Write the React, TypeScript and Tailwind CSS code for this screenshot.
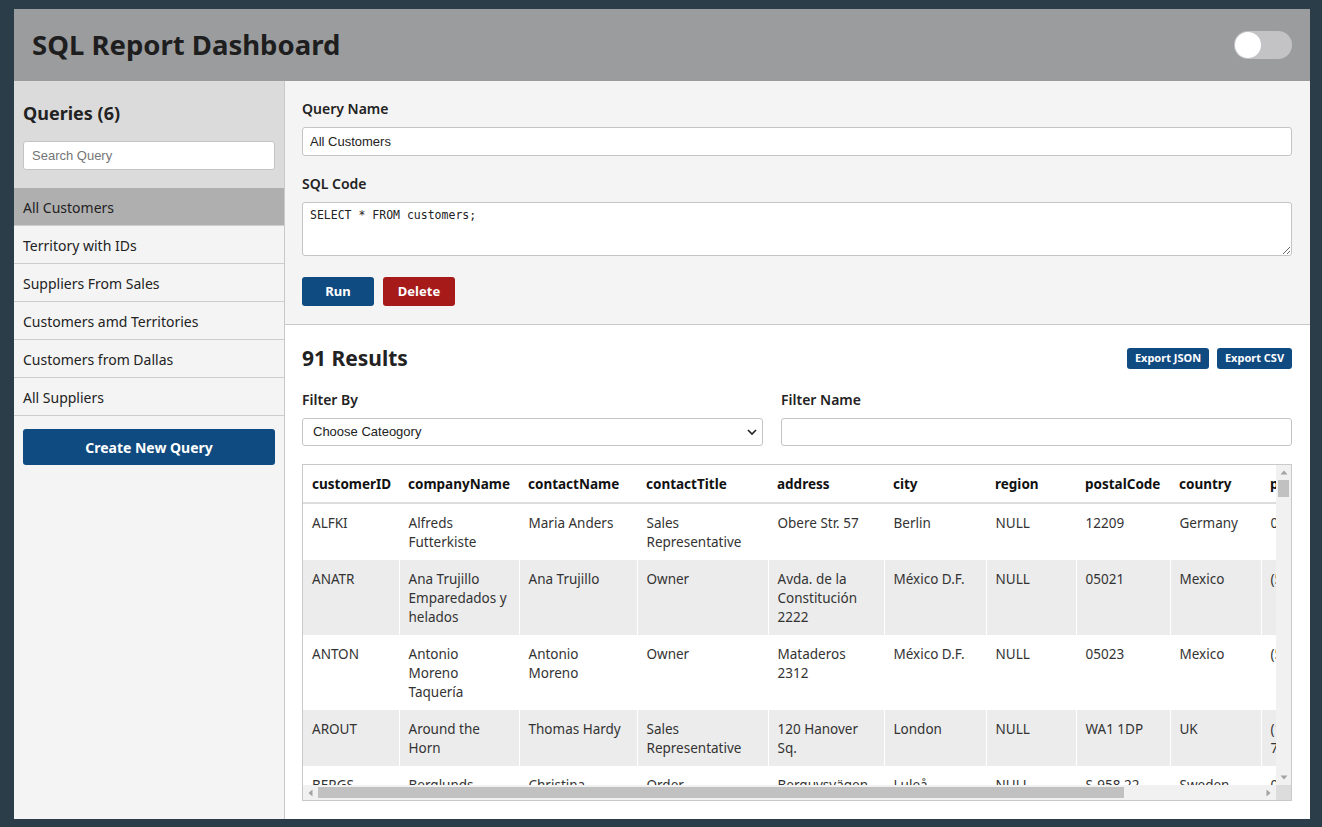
import { useState } from 'react';

const queries = [
  'All Customers',
  'Territory with IDs',
  'Suppliers From Sales',
  'Customers amd Territories',
  'Customers from Dallas',
  'All Suppliers',
];

const columns = [
  { key: 'customerID', w: 'w-[96px]' },
  { key: 'companyName', w: 'w-[120px]' },
  { key: 'contactName', w: 'w-[118px]' },
  { key: 'contactTitle', w: 'w-[131px]' },
  { key: 'address', w: 'w-[116px]' },
  { key: 'city', w: 'w-[102px]' },
  { key: 'region', w: 'w-[90px]' },
  { key: 'postalCode', w: 'w-[94px]' },
  { key: 'country', w: 'w-[91px]' },
  { key: 'phone', w: 'w-[112px]' },
  { key: 'fax', w: 'w-[112px]' },
];

const rows = [
  ['ALFKI', 'Alfreds Futterkiste', 'Maria Anders', 'Sales Representative', 'Obere Str. 57', 'Berlin', 'NULL', '12209', 'Germany', '030-0074321', '030-0076545'],
  ['ANATR', 'Ana Trujillo Emparedados y helados', 'Ana Trujillo', 'Owner', 'Avda. de la Constitución 2222', 'México D.F.', 'NULL', '05021', 'Mexico', '(5) 555-4729', '(5) 555-3745'],
  ['ANTON', 'Antonio Moreno Taquería', 'Antonio Moreno', 'Owner', 'Mataderos 2312', 'México D.F.', 'NULL', '05023', 'Mexico', '(5) 555-3932', 'NULL'],
  ['AROUT', 'Around the Horn', 'Thomas Hardy', 'Sales Representative', '120 Hanover Sq.', 'London', 'NULL', 'WA1 1DP', 'UK', '(171) 555-7788', '(171) 555-6750'],
  ['BERGS', 'Berglunds snabbköp', 'Christina Berglund', 'Order Administrator', 'Berguvsvägen 8', 'Luleå', 'NULL', 'S-958 22', 'Sweden', '0921-12 34 65', '0921-12 34 67'],
  ['BLAUS', 'Blauer See Delikatessen', 'Hanna Moos', 'Sales Representative', 'Forsterstr. 57', 'Mannheim', 'NULL', '68306', 'Germany', '0621-08460', '0621-08924'],
];

function Arrow({ dir }: { dir: 'up' | 'down' | 'left' | 'right' }) {
  const d = {
    up: 'M0.5 5.5 L4 1.5 L7.5 5.5 Z',
    down: 'M0.5 1.5 L4 5.5 L7.5 1.5 Z',
    left: 'M5.5 0.5 L1.5 4 L5.5 7.5 Z',
    right: 'M1.5 0.5 L5.5 4 L1.5 7.5 Z',
  }[dir];
  return (
    <svg width="8" height="8" viewBox="0 0 8 8">
      <path d={d} fill="#a3a3a3" />
    </svg>
  );
}

export default function App() {
  const [selected, setSelected] = useState(0);

  return (
    <div className="min-h-screen bg-[#2b3d48] pt-[9px] pb-[8px] pl-[14px] pr-[12px] font-['Noto_Sans',sans-serif] text-[#222]">
      <div className="flex h-[810px] flex-col">
        <header className="flex h-[72px] shrink-0 items-center justify-between bg-[#9b9c9e] pl-[18px] pr-[18px]">
          <h1 className="text-[27.5px] font-bold leading-none text-[#1e1e1e]">SQL Report Dashboard</h1>
          <div className="flex h-[28px] w-[58px] items-center rounded-full bg-[#c3c3c5] px-[1px]">
            <div className="h-[26px] w-[26px] rounded-full bg-white" />
          </div>
        </header>

        <div className="flex min-h-0 flex-1">
          <aside className="flex w-[271px] shrink-0 flex-col border-r border-[#c9c9c9] bg-[#f4f4f4]">
            <div className="bg-[#dbdbdb] px-[9px] pt-[20px] pb-[18px]">
              <h2 className="text-[18px] font-bold leading-[24px]">Queries (6)</h2>
              <input
                placeholder="Search Query"
                className="mt-[16px] h-[29px] w-full rounded-[3px] border border-[#c4c4c4] bg-white px-[8px] font-['Liberation_Sans',Arial,sans-serif] text-[13px] placeholder:text-[#757575] outline-none"
              />
            </div>
            <ul>
              {queries.map((q, i) => (
                <li
                  key={q}
                  onClick={() => setSelected(i)}
                  className={`flex h-[38px] cursor-pointer items-center border-b border-[#cdcdcd] px-[9px] pt-[2px] text-[14px] ${
                    selected === i ? 'bg-[#afafaf]' : 'bg-[#f4f4f4]'
                  }`}
                >
                  {q}
                </li>
              ))}
            </ul>
            <div className="px-[9px] pt-[13px]">
              <button className="h-[36px] w-full rounded-[3px] bg-[#0f4a80] text-[14px] font-bold text-white">
                Create New Query
              </button>
            </div>
          </aside>

          <main className="flex min-w-0 flex-1 flex-col bg-white">
            <section className="border-b border-[#c9c9c9] bg-[#f4f4f4] pl-[17px] pr-[18px] pt-[18px] pb-[18px]">
              <label className="block text-[14px] font-semibold leading-[20px]">Query Name</label>
              <input
                defaultValue="All Customers"
                className="mt-[8px] h-[29px] w-full rounded-[3px] border border-[#c4c4c4] bg-white px-[7px] font-['Liberation_Sans',Arial,sans-serif] text-[13px] outline-none"
              />
              <label className="mt-[18px] block text-[14px] font-semibold leading-[20px]">SQL Code</label>
              <textarea
                defaultValue="SELECT * FROM customers;"
                className="mt-[8px] block h-[54px] w-full rounded-[3px] border border-[#c4c4c4] bg-white px-[7px] py-[4px] font-['DejaVu_Sans_Mono',monospace] text-[11.5px] leading-[16px] outline-none"
              />
              <div className="mt-[21px] flex gap-[9px]">
                <button className="h-[29px] w-[72px] rounded-[3px] bg-[#0f4a80] pt-[1px] text-[13px] font-bold text-white">Run</button>
                <button className="h-[29px] w-[72px] rounded-[3px] bg-[#a71a1a] pt-[1px] text-[13px] font-bold text-white">Delete</button>
              </div>
            </section>

            <section className="flex min-h-0 flex-1 flex-col pl-[17px] pr-[18px] pt-[21px] pb-[18px]">
              <div className="flex h-[24px] items-center justify-between">
                <h2 className="text-[21px] font-bold leading-[24px]">91 Results</h2>
                <div className="flex gap-[8px]">
                  <button className="h-[21px] w-[82px] rounded-[3px] bg-[#0f4a80] text-[11px] font-bold text-white">Export JSON</button>
                  <button className="h-[21px] w-[75px] rounded-[3px] bg-[#0f4a80] text-[11px] font-bold text-white">Export CSV</button>
                </div>
              </div>

              <div className="mt-[20px] flex gap-[18px]">
                <div className="w-[461px] shrink-0">
                  <label className="block text-[14px] font-semibold leading-[20px]">Filter By</label>
                  <div className="relative mt-[8px]">
                    <select className="h-[28px] w-full appearance-none rounded-[3px] border border-[#c4c4c4] bg-white px-[10px] font-['Liberation_Sans',Arial,sans-serif] text-[13px] outline-none">
                      <option>Choose Cateogory</option>
                    </select>
                    <svg className="pointer-events-none absolute right-[6px] top-[10px]" width="10" height="8" viewBox="0 0 10 8">
                      <path d="M1 2l4 4 4-4" fill="none" stroke="#222" strokeWidth="1.6" />
                    </svg>
                  </div>
                </div>
                <div className="flex-1">
                  <label className="block text-[14px] font-semibold leading-[20px]">Filter Name</label>
                  <input className="mt-[8px] h-[28px] w-full rounded-[3px] border border-[#c4c4c4] bg-white px-[8px] text-[13px] outline-none" />
                </div>
              </div>

              <div className="mt-[18px] grid min-h-0 flex-1 grid-cols-[1fr_15px] grid-rows-[1fr_15px] border border-[#c9c9c9]">
                <div className="min-h-0 min-w-0 overflow-hidden">
                  <table className="w-[1182px] table-fixed border-collapse text-left text-[13.5px] leading-[19px]">
                    <thead>
                      <tr className="border-b-2 border-[#dcdcdc] bg-white">
                        {columns.map((c) => (
                          <th key={c.key} className={`${c.w} whitespace-nowrap px-[9px] pt-[10px] pb-[8px] align-top font-bold text-[#111]`}>
                            {c.key}
                          </th>
                        ))}
                      </tr>
                    </thead>
                    <tbody>
                      {rows.map((r, i) => (
                        <tr key={r[0]} className={i % 2 === 1 ? 'bg-[#ececec]' : 'bg-white'}>
                          {r.map((v, j) => (
                            <td
                              key={j}
                              className={`px-[9px] pt-[10px] pb-[8px] align-top text-[#333] ${j > 0 ? 'border-l border-white' : ''}`}
                            >
                              {v}
                            </td>
                          ))}
                        </tr>
                      ))}
                    </tbody>
                  </table>
                </div>

                {/* vertical scrollbar */}
                <div className="flex flex-col bg-[#f1f1f1]">
                  <div className="flex h-[15px] items-center justify-center">
                    <Arrow dir="up" />
                  </div>
                  <div className="mx-[2px] h-[17px] bg-[#c1c1c1]" />
                  <div className="flex-1" />
                  <div className="flex h-[15px] items-center justify-center">
                    <Arrow dir="down" />
                  </div>
                </div>

                {/* horizontal scrollbar */}
                <div className="flex items-center bg-[#f1f1f1]">
                  <div className="flex h-[15px] w-[15px] items-center justify-center">
                    <Arrow dir="left" />
                  </div>
                  <div className="h-[11px] w-[806px] bg-[#c1c1c1]" />
                  <div className="flex-1" />
                  <div className="flex h-[15px] w-[15px] items-center justify-center">
                    <Arrow dir="right" />
                  </div>
                </div>
                <div className="bg-[#dcdcdc]" />
              </div>
            </section>
          </main>
        </div>
      </div>
    </div>
  );
}
